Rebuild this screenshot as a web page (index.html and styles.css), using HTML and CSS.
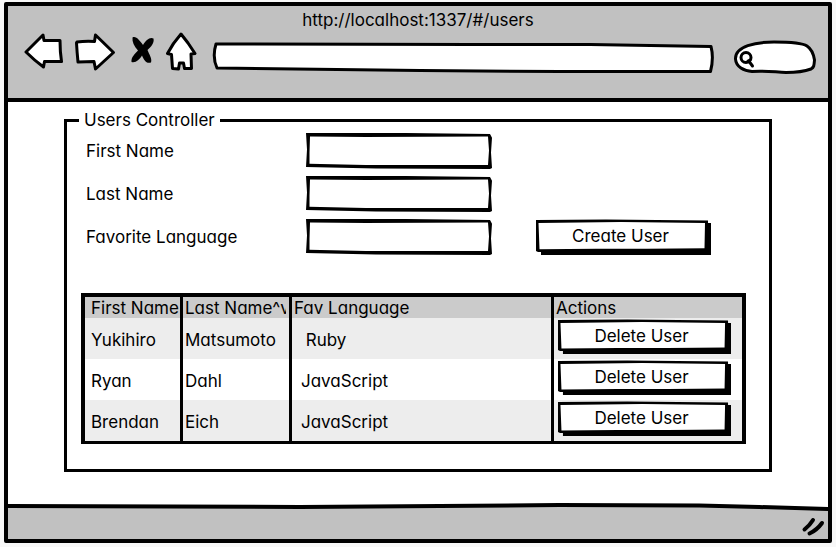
FILE: index.html
```html
<!DOCTYPE html>
<html lang="en">
<head>
<meta charset="utf-8">
<title>Users</title>
<link rel="stylesheet" href="styles.css">
</head>
<body>
<svg class="defs" aria-hidden="true">
  <symbol id="button-box" viewBox="0 0 175 35" preserveAspectRatio="none">
    <path d="M5 4H175V35H5z"/>
    <path d="M0 1L70 0.500L172 1.500V32H2L0 31z"/>
    <path fill="#fff" d="M2.500 4L85 3L169 4L168.500 28.500L110 29L60 29L3.500 29.500z"/>
  </symbol>
  <symbol id="field-box" viewBox="0 0 186 37" preserveAspectRatio="none">
    <path d="M0 0L100 0L184 1L186 5L185 20L186 36L184 37L70 36.500L0 35L1 17z"/>
    <path fill="#fff" d="M4 3.500L60 4L182 3.500L183 18L182 33L110 33L60 33L3.500 31.500L3.500 20z"/>
  </symbol>
</svg>
<div class="window">
  <header class="chrome">
    <div class="title">http://localhost:1337/#/users</div>
    <div class="toolbar">
      <button class="icon" type="button" aria-label="Back">
        <svg width="40" height="44" viewBox="24 30 40 44"><path class="ink" d="M26 52L43 35L44 40.500L60 40.500Q60 52 61.500 61.500L44.500 61.500L43.500 67Q34 60 26 52z"/></svg>
      </button>
      <button class="icon" type="button" aria-label="Forward">
        <svg width="42" height="44" viewBox="74 30 42 44"><path class="ink" d="M77 42Q85 41 94.500 41.500L95.500 35L113.500 52.500L95.500 69L94 61.500L78 62Q77 52 76.500 43z"/></svg>
      </button>
      <button class="icon" type="button" aria-label="Stop">
        <svg width="30" height="44" viewBox="126 30 30 44"><path d="M132.500 37.500C136 35.500 140 41 143 45C146 40 150 36.500 153.500 38.500C154.500 43 151 47 147.500 50C149 54 152.500 59 151 62.500C146 64 144 60 142 55.500C139 60 136 63 131.500 62C131 57 135 54 138 50.500C134 46 132 42 132.500 37.500z"/></svg>
      </button>
      <button class="icon" type="button" aria-label="Home">
        <svg width="32" height="44" viewBox="166 30 32 44"><path class="ink" d="M181 34L188 43L195 53.500L191 54L191.500 68.500L184.500 68.500L183.500 63L179.500 63L178.500 69L172.500 68.500L171.500 54.500L167.500 53.500Q173 43 181 34z"/></svg>
      </button>
      <label class="stack address">
        <svg viewBox="208 30 510 44" preserveAspectRatio="none"><path class="ink" d="M217 44L470 44.500L590 44.500L711 46.500Q714 58 710.500 71.500L560 71.500L420 70.500L217 68Q212 57 216 44z"/></svg>
        <input type="text" aria-label="Address">
      </label>
      <label class="stack search">
        <svg viewBox="728 30 90 44"><path class="ink" d="M735.500 59C735 46 756 42 774 42C786 42 801 42 807 46C813 50 814 57 814.500 60C814 66 814 67 811 69C803 72 795 72.500 786 72.500C774 72 765 70.500 752 71.500C744 71 736 67 735.500 59z"/><circle class="ink" cx="746" cy="57.500" r="5"/><path class="ink" d="M748 61L750 60M749.500 62L752.500 66"/></svg>
        <input type="search" aria-label="Search">
      </label>
    </div>
  </header>
  <main>
    <fieldset>
      <legend>Users Controller</legend>
      <form class="user-form">
        <label for="first">First Name</label>
        <div class="stack"><svg><use href="#field-box"/></svg><input id="first" type="text"></div>
        <label for="last">Last Name</label>
        <div class="stack"><svg><use href="#field-box"/></svg><input id="last" type="text"></div>
        <label for="language">Favorite Language</label>
        <div class="stack"><svg><use href="#field-box"/></svg><input id="language" type="text"></div>
        <button class="stack sketch create" type="button"><svg><use href="#button-box"/></svg><span>Create User</span></button>
      </form>
      <table>
        <colgroup><col class="col-first"><col class="col-last"><col><col class="col-actions"></colgroup>
        <thead>
          <tr><th>First Name</th><th><div class="clip">Last Name^v</div></th><th>Fav Language</th><th>Actions</th></tr>
        </thead>
        <tbody>
          <tr><td>Yukihiro</td><td>Matsumoto</td><td class="language">&nbsp;Ruby</td><td class="actions"><button class="stack sketch" type="button"><svg><use href="#button-box"/></svg><span>Delete User</span></button></td></tr>
          <tr><td>Ryan</td><td>Dahl</td><td class="language">JavaScript</td><td class="actions"><button class="stack sketch" type="button"><svg><use href="#button-box"/></svg><span>Delete User</span></button></td></tr>
          <tr><td>Brendan</td><td>Eich</td><td class="language">JavaScript</td><td class="actions"><button class="stack sketch" type="button"><svg><use href="#button-box"/></svg><span>Delete User</span></button></td></tr>
        </tbody>
      </table>
    </fieldset>
  </main>
  <footer class="stack">
    <svg viewBox="8 500 821 39" preserveAspectRatio="none"><path fill="#c1c1c1" d="M8 506L700 505L829 509V540H8z"/><path class="rule" d="M8 506L300 507L560 505L700 505.500L760 507L829 509"/></svg>
    <svg class="grip" width="24" height="20" viewBox="802 517 24 20"><path class="rule" d="M814 520Q811 525 805.500 529.500M823 523Q818 530 810.500 533.500"/></svg>
  </footer>
</div>
</body>
</html>
```
FILE: styles.css
```css
* {
  box-sizing: border-box;
}

body {
  margin: 0;
  padding: 2px 4px 4px;
  min-height: 100vh;
  display: flex;
  background: #f8f8f8;
  color: #000;
  font: 17px/20px Inter, "Liberation Sans", sans-serif;
  font-feature-settings: "cv11";
}

button,
input {
  margin: 0;
  padding: 0;
  border: 0;
  background: none;
  color: inherit;
  font: inherit;
  font-feature-settings: inherit;
}

svg {
  display: block;
}

.defs {
  position: absolute;
  width: 0;
  height: 0;
}

.ink {
  fill: #fff;
  stroke: #000;
  stroke-width: 3;
  stroke-linejoin: round;
  stroke-linecap: round;
}

.rule {
  fill: none;
  stroke: #000;
  stroke-width: 4;
  stroke-linecap: round;
}

.stack {
  display: grid;
}

.stack > * {
  grid-area: 1 / 1;
  width: 100%;
  height: 100%;
  min-width: 0;
}

.window {
  flex: 1;
  display: flex;
  flex-direction: column;
  border: 4px solid #000;
  border-radius: 2px;
  background: #fff;
}

.chrome {
  padding: 4px 0 24px;
  border-bottom: 4px solid #000;
  background: #c1c1c1;
}

.title {
  text-align: center;
}

.toolbar {
  display: flex;
  gap: 10px;
  padding: 0 10px 0 16px;
}

.toolbar input {
  padding: 0 16px;
}

.address {
  flex: 1;
  height: 44px;
}

.search {
  width: 90px;
  height: 44px;
}

.toolbar .search input {
  padding-left: 28px;
}

main {
  flex: 1;
  padding: 8px 56px 28px;
}

fieldset {
  margin: 0;
  padding: 3px 23px 25px 14px;
  min-width: 0;
  border: 3px solid #000;
}

legend {
  margin-left: -2px;
  padding: 0 5px;
}

.user-form {
  display: grid;
  grid-template-columns: 220px 186px 1fr;
  grid-auto-rows: 36px;
  row-gap: 7px;
  align-items: center;
  padding-left: 5px;
}

.user-form label {
  grid-column: 1;
}

.user-form .stack {
  height: 36px;
}

.user-form input {
  padding: 0 8px;
}

.user-form .create {
  grid-column: 3;
  width: 175px;
  margin-left: 44px;
}

.sketch {
  height: 35px;
}

.sketch span {
  padding: 7px 6px 8px 0;
  text-align: center;
}

table {
  width: 100%;
  margin-top: 38px;
  table-layout: fixed;
  border: 4px solid #000;
  border-bottom-width: 3px;
  border-spacing: 0;
}

.col-first {
  width: 98px;
}

.col-last {
  width: 109px;
}

.col-actions {
  width: 188px;
}

th,
td {
  overflow: hidden;
  padding: 0 0 0 2px;
  border-right: 3px solid #000;
  text-align: left;
  font-weight: 400;
  white-space: nowrap;
}

th {
  height: 21px;
  background: #cbcbcb;
}

.clip {
  margin-right: 3px;
  overflow: hidden;
}

td {
  height: 41px;
  padding-top: 3px;
}

th:first-child,
td:first-child {
  padding-left: 6px;
}

th:last-child,
td:last-child {
  border-right: 0;
}

tbody tr:nth-child(odd) {
  background: #ededed;
}

.language {
  padding-left: 9px;
}

.actions {
  padding: 1px 11px 0 4px;
  vertical-align: top;
}

.actions .sketch {
  width: 100%;
}

footer {
  height: 39px;
}

footer .grip {
  width: 24px;
  height: 20px;
  justify-self: end;
  align-self: end;
  margin: 0 3px 2px 0;
}
```
